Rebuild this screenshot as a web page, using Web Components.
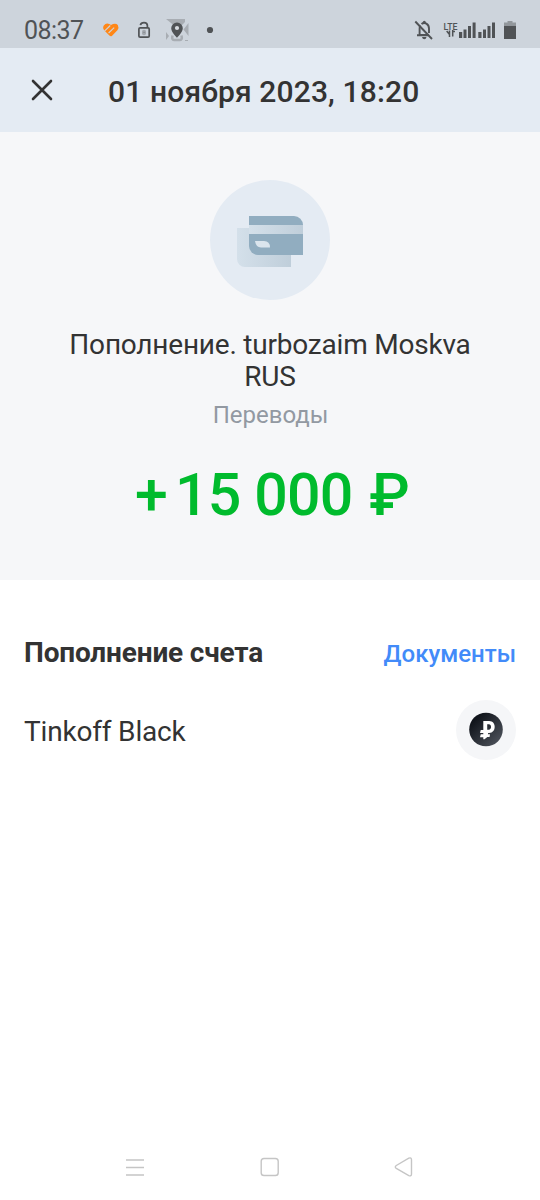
<!DOCTYPE html>
<html lang="ru">
<head>
<meta charset="utf-8">
<title>Операция</title>
<style>
html,body{margin:0;background:#fff}
body{font-family:Roboto,"Noto Sans",sans-serif;color:#333}
</style>
</head>
<body>
<operation-page></operation-page>
<script>
const define=(name,html)=>{
  const t=document.createElement('template');
  t.innerHTML=html;
  customElements.define(name,class extends HTMLElement{
    constructor(){super();this.attachShadow({mode:'open'}).append(t.content.cloneNode(true));}
  });
};

define('status-bar',`<style>
:host{display:flex;height:48px;background:#cdd4dc;color:#505356;box-sizing:border-box;padding:12px 23px 0 24px;justify-content:space-between}
.time{font-size:25px;line-height:38px;letter-spacing:-.55px;width:78px}
.l,.r{display:flex;height:36px}
svg{display:block}
</style>
<div class="l"><span class="time">08:37</span>
<svg width="120" height="36" viewBox="102 12 120 36">
<path d="M110.800 36.300q-.7 0-1.400-.7l-5-5q-2.200-2.800-.6-5.200 2.300-2.800 5.500-1.300l1.700 1 2-1q3-1.200 4.800 1 1.500 2.600-.4 5.200l-5.300 5.400q-.7.600-1.300.6z" fill="#ff8717"/><path d="M104.500 31.200 110.300 25.500M108.600 33 114.200 27.600" stroke="#cdd4dc" stroke-width="1.100"/>
<g fill="none" stroke="#505356" stroke-width="1.700"><rect x="138.900" y="27.800" width="10.300" height="9.400" rx="1.200"/><path d="M140.400 25.200c.4-2 1.700-2.600 3.600-2.600 2.400 0 3.400 1.400 3.400 3.200v2"/></g>
<rect x="142" y="29.700" width="4" height="5.500" rx="1.800" fill="#a3a8ae"/><path d="M143.200 32.300h1.800" stroke="#858a90"/>
<path d="M166 19h19v3l-5 5h-4zM188.500 23v13l-5-6.500zM166 32l3 4-3 4zM185 40h3v1h-3z" fill="#a8adb3"/><path d="M172.500 35.500q-1 4.500 1.500 4.500h6q2.500 0 1.500-4.500" fill="none" stroke="#a8adb3" stroke-width="2.500"/>
<path d="M177 22.500a5.800 5.800 0 0 0-5.800 5.800c0 4 5.800 9.500 5.800 9.500s5.800-5.500 5.800-9.500a5.800 5.800 0 0 0-5.800-5.800z" fill="#505356"/><circle cx="177" cy="28" r="2.100" fill="#d7dbe0"/>
<circle cx="210" cy="30" r="3.100" fill="#505356"/>
</svg></div>
<div class="r"><svg width="104" height="36" viewBox="413 12 104 36">
<g fill="none" stroke="#505356" stroke-width="1.900"><path d="M415.300 21.500 432 39"/><path d="M420.300 25.500q-.7 1.300-.7 3v6.500h9M417 35.300h11M421.500 24c3-2.500 7.500-.2 7.500 4.500v4.500"/></g>
<circle cx="424.300" cy="22.300" r="1.500" fill="#505356"/><path d="M422 37h4.500q-.4 2.300-2.200 2.300T422 37z" fill="#505356"/>
<text x="443.600" y="30.200" font-family="Roboto,sans-serif" font-size="9.700" font-weight="500" textLength="14" lengthAdjust="spacingAndGlyphs" fill="#505356">LTE</text>
<g fill="none" stroke="#505356" stroke-width="1.500"><path d="M449.500 30.500v6.500M446.700 31 449.500 34.500M452.700 30v6.500M452.700 31.500h2.300"/></g>
<g fill="#505356"><path d="M459 32h3.200v6H459zM463.500 29.500h3v8.500h-3zM468 26h3v12h-3zM472.600 22.500h3V38h-3zM478.300 32h3.200v6h-3.200zM483 29.500h3v8.500h-3zM487.500 26h3v12h-3zM492 22.500h3V38h-3z"/><path d="M504 25.500h12V39h-12z"/></g>
<path d="M507.500 21h5v1.500h3.500v3h-12v-3h3.500z" fill="#92979c"/>
</svg></div>`);

define('title-bar',`<style>
:host{display:flex;height:84px;background:#e4ebf3;align-items:center;padding-left:30px;box-sizing:border-box}
svg{display:block;margin-right:54px;margin-bottom:1px}
span{font-size:30px;font-weight:500;line-height:36px;padding-top:4px;white-space:nowrap;letter-spacing:.14px}
</style><svg width="24" height="24" viewBox="0 0 24 24"><path d="M3 3 21 21M21 3 3 21" stroke="#333" stroke-width="2.600" stroke-linecap="round"/></svg><span><slot></slot></span>`);

define('card-emblem',`<style>
:host{display:block;width:120px;height:120px}svg{display:block}
</style><svg width="120" height="120" viewBox="210 180 120 120">
<defs><linearGradient id="a"><stop stop-color="#d4e0ea"/><stop offset="1" stop-color="#bfceda"/></linearGradient></defs>
<circle cx="270" cy="240" r="60" fill="#e4ebf3"/>
<path d="M237 228h54v39h-46a8 8 0 0 1-8-8z" fill="url(#a)"/>
<path d="M249 216h45a9 9 0 0 1 9 9v30h-45a9 9 0 0 1-9-9z" fill="#91adc0"/>
<path d="M249 225h54v9h-54z" fill="url(#a)"/>
<path d="M255 241h9q6 0 6 6.500h-9q-5 0-6-6.500z" fill="#dbe5ed"/></svg>`);

define('operation-summary',`<style>
:host{display:flex;flex-direction:column;align-items:center;height:448px;box-sizing:border-box;padding-top:48px;background:#f6f7f9;text-align:center}
.name{font-size:28px;line-height:32px;margin-top:29px;width:431px;letter-spacing:-.21px}
.cat{font-size:24px;line-height:32px;color:#9299a2;margin-top:6px;padding-left:1px}
.sum{display:flex;font-size:59px;font-weight:500;line-height:70px;color:#00bb2d;margin-top:29px;white-space:pre;letter-spacing:-.8px;padding-left:4px}
</style><card-emblem></card-emblem><div class="name"><slot name="name"></slot></div><div class="cat"><slot name="category"></slot></div><div class="sum"><slot name="sum"></slot></div>`);

define('section-head',`<style>
:host{display:flex;justify-content:space-between;align-items:baseline;margin:55px 24px 0;line-height:36px;white-space:nowrap}
.h{font-size:28px;font-weight:700;letter-spacing:-.17px}.a{font-size:24px;font-weight:500;color:#428bf9}
</style><span class="h"><slot></slot></span><span class="a"><slot name="action"></slot></span>`);

define('account-row',`<style>
:host{display:flex;justify-content:space-between;align-items:center;height:60px;margin:28px 24px 0}
span{font-size:28px;line-height:36px;padding-top:3px;letter-spacing:-.18px}svg{display:block}
</style><span><slot></slot></span><svg width="60" height="60" viewBox="0 0 60 60">
<defs><linearGradient id="g" x1="0" y1="0" x2="1" y2="1"><stop offset=".2" stop-color="#11151c"/><stop offset="1" stop-color="#555a63"/></linearGradient></defs>
<circle cx="30" cy="30" r="30" fill="#f5f6f8"/><circle cx="30" cy="29.500" r="16.800" fill="url(#g)"/>
<path transform="translate(-.3 -.8) scale(1.030)" d="M28 21.200h4.500c7.200 0 7.200 11.600 0 11.600h-1l-.2 1.200h2l-.4 2.700h-2.200l-2.700 2.300h-1.200V37h-3.200l.7-3h2.500v-1.200h-3.200l.7-3h2.500v-8.600zM30.600 24.400v5.200h1.500c3 0 3-5.200 0-5.200z" fill="#fff" fill-rule="evenodd"/></svg>`);

define('nav-bar',`<style>
:host{display:flex;height:66px;justify-content:space-between;padding:0 125px 0 124px;align-items:center}
svg{display:block;fill:none;stroke:#c5c5c5;stroke-width:1.400}
</style>
<svg width="22" height="22"><path d="M2 4h18M2 11.500h18M2 19h18"/></svg>
<svg width="22" height="22"><rect x="2.200" y="2.500" width="17" height="17" rx="2.800"/></svg>
<svg width="22" height="22"><path d="M3.300 9.500 15.800 2.200q2.700-1 2.700 1.600v14.200q0 2.600-2.700 1.600L3.300 12.400q-2-1.400 0-2.900z"/></svg>`);

define('operation-page',`<style>
:host{display:flex;flex-direction:column;width:540px;height:1200px;overflow:hidden}
nav-bar{margin-top:auto}
.plus{margin-right:8px}
.cur{margin-left:3px}
</style>
<status-bar></status-bar>
<title-bar>01 ноября 2023, 18:20</title-bar>
<operation-summary><span slot="name">Пополнение. turbozaim Moskva RUS</span><span slot="category">Переводы</span><span slot="sum" class="plus">+</span><span slot="sum">15 000 <span class="cur">₽</span></span></operation-summary>
<section-head>Пополнение счета<span slot="action">Документы</span></section-head>
<account-row>Tinkoff Black</account-row>
<nav-bar></nav-bar>`);
</script>
</body>
</html>
